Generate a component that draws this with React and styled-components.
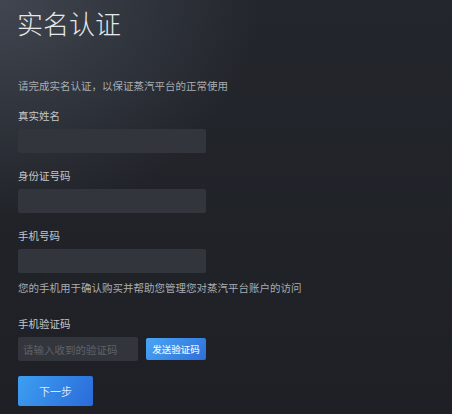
import React from 'react'
import styled, { createGlobalStyle } from 'styled-components'

const GlobalStyle = createGlobalStyle`
    html, body {
        margin: 0;
        padding: 0;
        background: #212429;
    }
    body {
        font-family: "Noto Sans CJK SC", "Noto Sans", sans-serif;
    }
    #root {
        min-height: 100vh;
    }
`

const Page = styled.div`
    box-sizing: border-box;
    min-height: 100vh;
    padding: 10px 18px 0;
    display: flex;
    flex-direction: column;
    align-items: flex-start;
    background:
        radial-gradient(ellipse 260px 220px at 0 0, rgba(74, 80, 92, 0.75) 0%, rgba(74, 80, 92, 0) 100%),
        linear-gradient(180deg, #23262c 0%, #1e2025 100%);
`

const Title = styled.h1`
    margin: 0 0 0 -1px;
    font-size: 26px;
    line-height: 26px;
    font-weight: 300;
    color: #e6e8ea;
`

const Intro = styled.p`
    margin: 43px 0 0;
    font-size: 10.5px;
    line-height: 14px;
    color: #a9adb2;
`

const Field = styled.div`
    display: flex;
    flex-direction: column;
    margin-top: ${props => props.gap || 16}px;
`

const Label = styled.label`
    font-size: 10.5px;
    line-height: 14px;
    color: #c4c7ca;
    margin-bottom: 6px;
`

const Input = styled.input`
    box-sizing: border-box;
    width: ${props => props.width || 188}px;
    height: 24px;
    border: none;
    border-radius: 2px;
    outline: none;
    padding: 0 5px;
    background: #32353c;
    color: #d0d3d6;
    font-family: inherit;
    font-size: 10.5px;
    &::placeholder {
        color: #5f636a;
    }
`

const Hint = styled.p`
    margin: 8px 0 0;
    font-size: 10.5px;
    line-height: 14px;
    color: #a9adb2;
`

const CodeRow = styled.div`
    display: flex;
    align-items: center;
    gap: 8px;
`

const SendButton = styled.button`
    box-sizing: border-box;
    width: 60px;
    height: 22px;
    border: none;
    border-radius: 2px;
    padding: 0;
    background: linear-gradient(135deg, #4aa6f4 0%, #2d6fdb 100%);
    color: #eef5fd;
    font-family: inherit;
    font-size: 9.5px;
    font-weight: 500;
    cursor: pointer;
`

const NextButton = styled.button`
    box-sizing: border-box;
    margin-top: 15px;
    width: 75px;
    height: 30px;
    border: none;
    border-radius: 2px;
    padding: 0;
    background: linear-gradient(120deg, #3d9ff1 0%, #2a6bd9 100%);
    color: #dbe9f8;
    font-family: inherit;
    font-size: 11px;
    cursor: pointer;
`

export default function App() {
    return (
        <>
            <GlobalStyle />
            <Page>
                <Title>实名认证</Title>
                <Intro>请完成实名认证，以保证蒸汽平台的正常使用</Intro>

                <Field>
                    <Label>真实姓名</Label>
                    <Input />
                </Field>

                <Field>
                    <Label>身份证号码</Label>
                    <Input />
                </Field>

                <Field>
                    <Label>手机号码</Label>
                    <Input />
                </Field>
                <Hint>您的手机用于确认购买并帮助您管理您对蒸汽平台账户的访问</Hint>

                <Field gap={22}>
                    <Label>手机验证码</Label>
                    <CodeRow>
                        <Input width={120} placeholder="请输入收到的验证码" />
                        <SendButton>发送验证码</SendButton>
                    </CodeRow>
                </Field>

                <NextButton>下一步</NextButton>
            </Page>
        </>
    )
}
